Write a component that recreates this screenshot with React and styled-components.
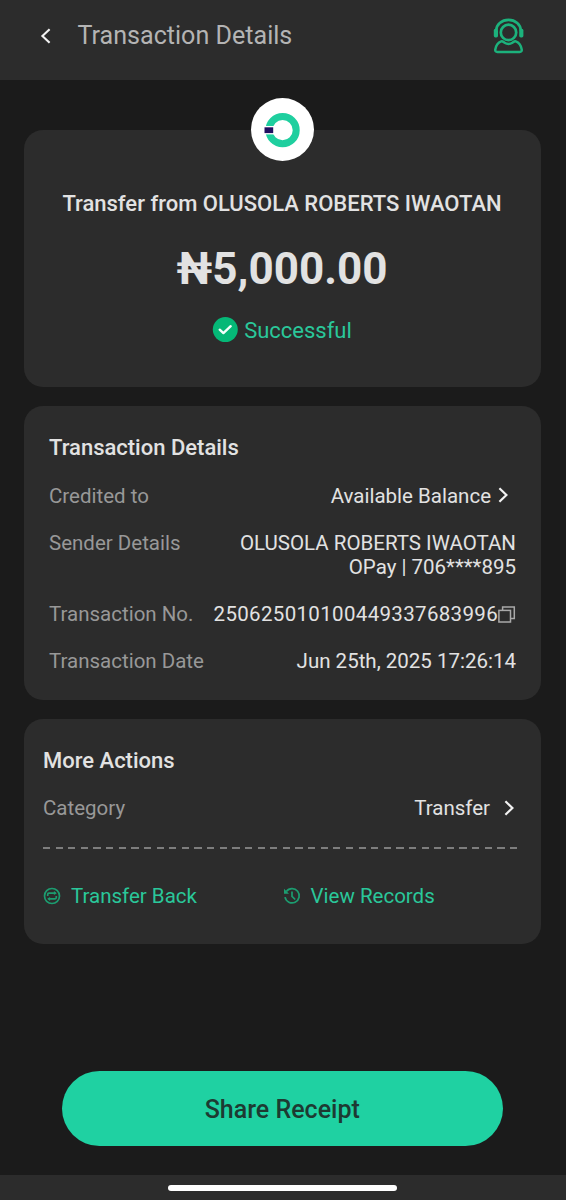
import styled, { createGlobalStyle } from "styled-components";

const GlobalStyle = createGlobalStyle`
  * {
    box-sizing: border-box;
    margin: 0;
    padding: 0;
  }
  body {
    background: #1b1b1b;
    font-family: Roboto, "Liberation Sans", sans-serif;
    color: #e2e2e2;
  }
  svg {
    display: block;
    flex: none;
  }
`;

// Icons
const BackIcon = () => (
  <svg width="12" height="18" viewBox="0 0 12 18" fill="none">
    <path d="M9.6 2.2L2.4 9l7.2 6.8" stroke="#f2f2f2" strokeWidth="2.1" />
  </svg>
);

const ChevronIcon = () => (
  <svg width="11" height="18" viewBox="0 0 11 18" fill="none">
    <path d="M1.4 1.3L8.4 8l-7 6.7" stroke="#f2f2f2" strokeWidth="2.2" />
  </svg>
);

const SupportIcon = () => (
  <svg width="31" height="36" viewBox="0 0 31 36" fill="none" stroke="#1cb27c">
    <path d="M3.2 12.5a12.3 10.6 0 0 1 24.6 0" strokeWidth="2.6" />
    <rect x="0.8" y="10.8" width="4.2" height="8.6" rx="1.6" fill="#1cb27c" stroke="none" />
    <rect x="26.2" y="10.8" width="4.2" height="8.6" rx="1.6" fill="#1cb27c" stroke="none" />
    <circle cx="15.5" cy="14.4" r="7.7" strokeWidth="2.7" />
    <path
      d="M8.2 23.4C5 24.6 3 27.6 2.3 31.4c-.3 1.6.5 2.5 2 2.5h22.4c1.5 0 2.3-.9 2-2.5-.7-3.8-2.7-6.8-5.9-8-1.4-.4-2.3.6-3.4 1.3a7.2 7.2 0 0 1-7.8 0c-1.1-.7-2-1.7-3.4-1.3z"
      strokeWidth="2.5"
    />
  </svg>
);

const LogoIcon = () => (
  <svg width="38" height="36" viewBox="0 0 38 36" fill="none">
    <circle cx="19.6" cy="18.2" r="13.6" stroke="#1fcf9f" strokeWidth="7" />
    <path d="M.2 14h12.4v8.4H.2z" fill="#fff" />
    <path d="M1.5 15.3h8.7v5.8H1.5z" fill="#210f60" />
  </svg>
);

const CheckIcon = () => (
  <svg width="26" height="26" viewBox="0 0 26 26" fill="none">
    <circle cx="13.3" cy="12.6" r="12.5" fill="#05b877" />
    <path
      d="M7.7 12.7l3.7 3.4 7.3-6.9"
      stroke="#f4fffb"
      strokeWidth="2.4"
      strokeLinecap="round"
      strokeLinejoin="round"
    />
  </svg>
);

const CopyIcon = () => (
  <svg width="18" height="18" viewBox="0 0 18 18" fill="none" stroke="#a9a9a9" strokeWidth="1.5">
    <rect x=".9" y="4.4" width="11.6" height="11.6" />
    <path d="M4.6 4.4V.9h11.7v11.6h-3.8" />
  </svg>
);

const TransferIcon = () => (
  <svg width="18" height="18" viewBox="0 0 18 18" fill="none" stroke="#1c9d70" strokeWidth="1.7">
    <circle cx="9" cy="9" r="7.5" />
    <path d="M4.7 9V7.4c0-.8.4-1.2 1.2-1.2h6.6" />
    <path d="M13.3 9v1.6c0 .8-.4 1.2-1.2 1.2H5.5" />
    <path d="M10.9 3.9l2.9 2.3-2.9 1.8zM7.1 14.1l-2.9-2.3L7.1 10z" fill="#1c9d70" stroke="none" />
  </svg>
);

const HistoryIcon = () => (
  <svg width="18" height="18" viewBox="0 0 18 18" fill="none" stroke="#1c9d70" strokeWidth="1.7">
    <path d="M3.3 4.4A7.2 7.2 0 1 1 2 10.2" />
    <path d="M1 1.8v5h5z" fill="#1c9d70" stroke="none" />
    <path d="M9 4.6v4.7l3.2 3.2" />
  </svg>
);

const details = [
  { label: "Credited to", lines: ["Available Balance"], link: true },
  { label: "Sender Details", lines: ["OLUSOLA ROBERTS IWAOTAN", "OPay | 706****895"] },
  { label: "Transaction No.", lines: ["250625010100449337683996"], copy: true },
  { label: "Transaction Date", lines: ["Jun 25th, 2025 17:26:14"] },
];

const App = () => {
  return (
    <>
      <GlobalStyle />
      <Page>
        <Header>
          <BackIcon />
          <HeaderTitle>Transaction Details</HeaderTitle>
          <SupportIcon />
        </Header>

        <Content>
          <Summary>
            <Logo>
              <LogoIcon />
            </Logo>
            <Sender>Transfer from OLUSOLA ROBERTS IWAOTAN</Sender>
            <Amount>₦5,000.00</Amount>
            <Status>
              <CheckIcon />
              <span>Successful</span>
            </Status>
          </Summary>

          <DetailsCard>
            <CardTitle>Transaction Details</CardTitle>
            <Rows>
              {details.map(({ label, lines, link, copy }) => (
                <Row key={label}>
                  <Label>{label}</Label>
                  <Value $inset={link} $wide={copy}>
                    <div>
                      {lines.map((line) => (
                        <p key={line}>{line}</p>
                      ))}
                    </div>
                    {link && <ChevronIcon />}
                    {copy && <CopyIcon />}
                  </Value>
                </Row>
              ))}
            </Rows>
          </DetailsCard>

          <ActionsCard>
            <CardTitle>More Actions</CardTitle>
            <Row>
              <Label>Category</Label>
              <Category>
                Transfer
                <ChevronIcon />
              </Category>
            </Row>
            <Divider />
            <Actions>
              <Action>
                <TransferIcon />
                Transfer Back
              </Action>
              <Action>
                <HistoryIcon />
                View Records
              </Action>
            </Actions>
          </ActionsCard>
        </Content>

        <ShareButton>Share Receipt</ShareButton>
        <NavBar>
          <NavHandle />
        </NavBar>
      </Page>
    </>
  );
};

const Page = styled.div`
  width: 566px;
  height: 1200px;
  display: flex;
  flex-direction: column;
  overflow: hidden;
  background: #1b1b1b;
`;

const Header = styled.header`
  height: 80px;
  padding: 0 42px 9px 40px;
  display: flex;
  align-items: center;
  background: #2c2c2c;
`;

const HeaderTitle = styled.h1`
  flex: 1;
  margin-left: 25.5px;
  font-size: 25.1px;
  font-weight: 400;
  color: #b4b4b4;
`;

const Content = styled.main`
  flex: 1;
  padding: 50px 25.5px 0 23.5px;
  display: flex;
  flex-direction: column;
  gap: 19px;
`;

const Card = styled.section`
  border-radius: 19px;
  background: #2c2c2c;
`;

const Summary = styled(Card)`
  position: relative;
  height: 257px;
  padding-top: 61px;
  display: flex;
  flex-direction: column;
  align-items: center;
`;

const Logo = styled.div`
  position: absolute;
  top: -31.6px;
  left: 227.2px;
  width: 63px;
  height: 63px;
  border-radius: 50%;
  display: flex;
  align-items: center;
  justify-content: center;
  background: #fff;
`;

const Sender = styled.h2`
  font-size: 22px;
  line-height: 26px;
  font-weight: 500;
  white-space: nowrap;
`;

const Amount = styled.p`
  margin-top: 25px;
  font-size: 44px;
  line-height: 54px;
  font-weight: 700;
`;

const Status = styled.div`
  margin-top: 21px;
  display: flex;
  gap: 6px;
  font-size: 22px;
  line-height: 26px;
  color: #2ac79a;

  span {
    padding-top: 1px;
  }
`;

const DetailsCard = styled(Card)`
  height: 294px;
  padding: 29px 24.5px 0 25.5px;
`;

const ActionsCard = styled(Card)`
  height: 225px;
  padding: 29px 23px 0 19.5px;
`;

const CardTitle = styled.h2`
  margin-bottom: 23px;
  font-size: 22px;
  line-height: 26px;
  font-weight: 500;
`;

const Rows = styled.div`
  display: flex;
  flex-direction: column;
  gap: 23.6px;
  padding-top: 0.6px;
`;

const Row = styled.div`
  display: flex;
  justify-content: space-between;
  font-size: 20.5px;
  line-height: 23.7px;
  white-space: nowrap;
`;

const Label = styled.span`
  color: #989898;
`;

const Value = styled.div`
  display: flex;
  align-items: center;
  gap: ${({ $inset }) => ($inset ? "7px" : "0")};
  margin-right: ${({ $inset }) => ($inset ? "7px" : "0")};
  letter-spacing: ${({ $wide }) => ($wide ? "0.33px" : "normal")};
  text-align: right;
`;

const Category = styled.span`
  display: flex;
  align-items: center;
  gap: 13.5px;
  margin-right: 3px;
`;

const Divider = styled.div`
  height: 2px;
  margin-top: 26px;
  margin-right: -1px;
  background: repeating-linear-gradient(
    90deg,
    #7d7d7d 0 7.2px,
    transparent 7.2px 12.62px
  );
`;

const Actions = styled.div`
  margin-top: 35px;
  display: grid;
  grid-template-columns: 239.5px 1fr;
`;

const Action = styled.button`
  display: flex;
  align-items: center;
  gap: 10px;
  border: none;
  background: none;
  font: 400 20.5px/24px Roboto, "Liberation Sans", sans-serif;
  color: #2ac79a;
`;

const ShareButton = styled.button`
  width: 441.5px;
  height: 75px;
  margin: 0 auto 29px 61.5px;
  padding-top: 2px;
  border: none;
  border-radius: 38px;
  background: #1fd1a2;
  font: 500 25px/30px Roboto, "Liberation Sans", sans-serif;
  color: #1d3a32;
`;

const NavBar = styled.footer`
  height: 25px;
  padding: 10px 0 0 168px;
  background: #2c2c2c;
`;

const NavHandle = styled.div`
  width: 229px;
  height: 6px;
  border-radius: 3px;
  background: #fff;
`;

export default App;
